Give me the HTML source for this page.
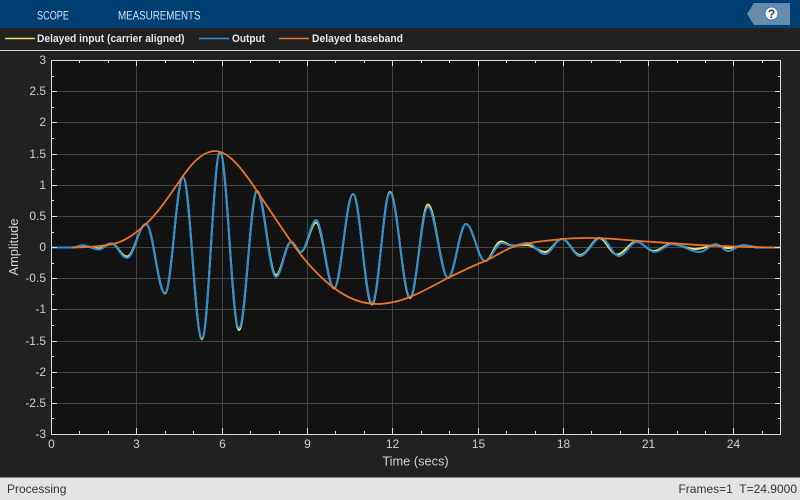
<!DOCTYPE html>
<html><head><meta charset="utf-8"><style>
html,body{margin:0;padding:0;width:800px;height:500px;overflow:hidden;background:#212121}
svg{display:block}
text{font-family:"Liberation Sans",Arial,sans-serif}
</style></head><body>
<svg width="800" height="500" viewBox="0 0 800 500" xmlns="http://www.w3.org/2000/svg">
<rect width="800" height="500" fill="#212121"/>
<rect width="800" height="28" fill="#003f73"/>
<text x="37" y="19.5" font-size="11.5" fill="#d6e2ec" textLength="32" lengthAdjust="spacingAndGlyphs">SCOPE</text>
<text x="118" y="19.5" font-size="11.5" fill="#d6e2ec" textLength="82.5" lengthAdjust="spacingAndGlyphs">MEASUREMENTS</text>
<polygon points="747,14 754,3 790,3 790,25 754,25" fill="#668cab"/>
<circle cx="771.5" cy="13.5" r="6.5" fill="#fff" stroke="#2a7fd0" stroke-width="1"/>
<text x="771.5" y="18" font-size="12" font-weight="bold" fill="#333" text-anchor="middle">?</text>

<rect x="0" y="50" width="800" height="1" fill="#d8d8d8"/>
<path d="M5 38.5H35" stroke="#f0df60" stroke-width="1.5" fill="none"/>
<path d="M199 38.5H229" stroke="#2b8ed6" stroke-width="1.5" fill="none"/>
<path d="M279 38.5H309" stroke="#e8772a" stroke-width="1.5" fill="none"/>
<g font-size="11" font-weight="bold" fill="#e6e6e6">
<text x="37" y="42" textLength="147.5" lengthAdjust="spacingAndGlyphs">Delayed input (carrier aligned)</text>
<text x="232" y="42" textLength="33" lengthAdjust="spacingAndGlyphs">Output</text>
<text x="312" y="42" textLength="91" lengthAdjust="spacingAndGlyphs">Delayed baseband</text>
</g>

<rect x="51" y="60" width="730" height="375" fill="#121212"/>
<path fill="none" stroke="#464646" stroke-width="1" d="M51 91.5H781M51 122.5H781M51 154.5H781M51 185.5H781M51 216.5H781M51 247.5H781M51 278.5H781M51 309.5H781M51 341.5H781M51 372.5H781M51 403.5H781M136.5 60V435M222.5 60V435M307.5 60V435M392.5 60V435M478.5 60V435M563.5 60V435M648.5 60V435M733.5 60V435"/>

<g fill="none" stroke-width="2" stroke-linejoin="round">
<path stroke="#f2e063" d="M51 247.5H72C76 247.5 79 246 83 246C89 246 93 248.5 99 248.5C103.5 248.5 106.5 243.5 111 243.5C117 243.5 121 256.5 127 256.5C134 256.5 139 224 146 224C153 224 158 293.5 165 293.5C171.5 293.5 176.5 177 183 177C190 177 195 339 202 339C208.5 339 213.5 152 220 152C227 152 232 330 239 330C245.5 330 250.5 191 257 191C264 191 269 275 276 275C281.5 275 285.5 242 291 242C295 242 297 252 301 252C306 252 311 222.5 316 222.5C322.5 222.5 327.5 288.5 334 288.5C341 288.5 346 194 353 194C360 194 365 304.5 372 304.5C378.5 304.5 383.5 192 390 192C397 192 403 298 410 298C416.5 298 421.5 204.5 428 204.5C435 204.5 441 278 448 278C454.5 278 459.5 224 466 224C473 224 478 261 485 261C491 261 495 241.5 501 241.5C505 241.5 508.5 245.5 512 245.5C517 245.5 522 245 527 245C533.5 245 538.5 252 545 252C551 252 556 239 562 239C568.5 239 573.5 255 580 255C587.5 255 593.5 238 599 238C605.5 238 610.5 254.5 617 254.5C623.5 254.5 630.5 241.5 636 241.5C642.5 241.5 647.5 251 654 251C660 251 665 244 671 244C680 244 686 249 695 249C703 249 708 245.5 716 245.5C720.5 245.5 723.5 248 728 248C733.5 248 737.5 246 743 246C749 246 754 247.5 760 247.5H780"/>
<path stroke="#2b8ed6" d="M51 247.5H72C76 247.5 79 245.3 83 245.3C89 245.3 93 249.5 99 249.5C103.5 249.5 106.5 243.5 111 243.5C117 243.5 121 258 127 258C134 258 139 224 146 224C153 224 158 293 165 293C171.5 293 176.5 177 183 177C190 177 195 338 202 338C208.5 338 213.5 153 220 153C227 153 232 328 239 328C245.5 328 250.5 192 257 192C264 192 269 277 276 277C281.5 277 285.5 242 291 242C295 242 297 252 301 252C306 252 311 220 316 220C322.5 220 327.5 288 334 288C341 288 346 194 353 194C360 194 365 303 372 303C378.5 303 383.5 193 390 193C397 193 403 297 410 297C416.5 297 421.5 207 428 207C435 207 441 278 448 278C454.5 278 459.5 224 466 224C473 224 478 261 485 261C491 261 496 243 502 243C505.5 243 508.5 246 512 246C517 246 522 243 527 243C533.5 243 538.5 254 545 254C551 254 556 239 562 239C568.5 239 573.5 256 580 256C587.5 256 593.5 238 601 238C607.5 238 612.5 256 619 256C625.5 256 630.5 242 637 242C643.5 242 648.5 252 655 252C661 252 666 244 672 244C682 244 690 252 700 252C706 252 710 244 716 244C720.5 244 723.5 251 728 251C733.5 251 737.5 245 743 245C749 245 754 247.5 760 247.5H780"/>
<path stroke="#e8752a" stroke-width="1.8" d="M72 247.5C85.7 247.5 99.3 246.7 113 244C124.3 241.7 135.7 233.7 147 223C159 211.6 171 193.4 183 176C193.7 160.5 204.3 151 215 151C229 151 243 170 257 191C268 207.5 279 224 290 240C304.7 261.3 319.3 277 334 288C348.3 298.7 362.7 304 377 304C388 304 399 301.4 410 297C422.7 291.9 435.3 284.4 448 278C460.3 271.9 472.7 266 485 261C494.3 257.3 503.7 250 513 247C529.7 242 546.3 240.7 563 239C572 238.1 581 238 590 238C606.7 238 623.3 239.8 640 241C660 242.4 680 244 700 245C726.7 246.3 753.3 247.5 780 247.5"/>
</g>

<path fill="none" stroke="#dcdcdc" stroke-width="1" d="M51.5 60.5H780.5V434.5H51.5Z"/>
<path fill="none" stroke="#dcdcdc" stroke-width="1" d="M51 76.5h3M51 107.5h3M51 138.5h3M51 169.5h3M51 200.5h3M51 232.5h3M51 263.5h3M51 294.5h3M51 325.5h3M51 356.5h3M51 387.5h3M51 418.5h3
M51 91.5h6M51 122.5h6M51 154.5h6M51 185.5h6M51 216.5h6M51 247.5h6M51 278.5h6M51 309.5h6M51 341.5h6M51 372.5h6M51 403.5h6
M781 76.5h-3M781 107.5h-3M781 138.5h-3M781 169.5h-3M781 200.5h-3M781 232.5h-3M781 263.5h-3M781 294.5h-3M781 325.5h-3M781 356.5h-3M781 387.5h-3M781 418.5h-3
M781 91.5h-6M781 122.5h-6M781 154.5h-6M781 185.5h-6M781 216.5h-6M781 247.5h-6M781 278.5h-6M781 309.5h-6M781 341.5h-6M781 372.5h-6M781 403.5h-6
M79.5 60v3M108.5 60v3M165.5 60v3M193.5 60v3M250.5 60v3M279.5 60v3M335.5 60v3M364.5 60v3M421.5 60v3M449.5 60v3M506.5 60v3M535.5 60v3M591.5 60v3M620.5 60v3M677.5 60v3M705.5 60v3M762.5 60v3
M136.5 60v6M222.5 60v6M307.5 60v6M392.5 60v6M478.5 60v6M563.5 60v6M648.5 60v6M733.5 60v6
M79.5 434v-3M108.5 434v-3M165.5 434v-3M193.5 434v-3M250.5 434v-3M279.5 434v-3M335.5 434v-3M364.5 434v-3M421.5 434v-3M449.5 434v-3M506.5 434v-3M535.5 434v-3M591.5 434v-3M620.5 434v-3M677.5 434v-3M705.5 434v-3M762.5 434v-3
M136.5 434v-6M222.5 434v-6M307.5 434v-6M392.5 434v-6M478.5 434v-6M563.5 434v-6M648.5 434v-6M733.5 434v-6"/>

<g font-size="12" fill="#cfcfcf" text-anchor="end">
<text x="46" y="64">3</text><text x="46" y="95">2.5</text><text x="46" y="126">2</text><text x="46" y="158">1.5</text><text x="46" y="189">1</text><text x="46" y="220">0.5</text><text x="46" y="251">0</text><text x="46" y="282">-0.5</text><text x="46" y="313">-1</text><text x="46" y="345">-1.5</text><text x="46" y="376">-2</text><text x="46" y="407">-2.5</text><text x="46" y="438">-3</text>
</g>
<g font-size="12" fill="#cfcfcf" text-anchor="middle">
<text x="51.5" y="448">0</text><text x="136.5" y="448">3</text><text x="222.5" y="448">6</text><text x="307.5" y="448">9</text><text x="392.5" y="448">12</text><text x="478.5" y="448">15</text><text x="563.5" y="448">18</text><text x="648.5" y="448">21</text><text x="733.5" y="448">24</text>
</g>
<text x="415.5" y="465.5" font-size="12.8" fill="#d4d4d4" text-anchor="middle">Time (secs)</text>
<text transform="translate(18 247) rotate(-90)" font-size="12.8" fill="#d4d4d4" text-anchor="middle">Amplitude</text>

<rect x="0" y="477" width="800" height="23" fill="#e4e4e4"/>
<rect x="0" y="477" width="800" height="1" fill="#8a8a8a"/>
<text x="7" y="493" font-size="12" fill="#333">Processing</text>
<text x="797" y="493" font-size="12" fill="#333" text-anchor="end" xml:space="preserve">Frames=1  T=24.9000</text>
</svg>
</body></html>
